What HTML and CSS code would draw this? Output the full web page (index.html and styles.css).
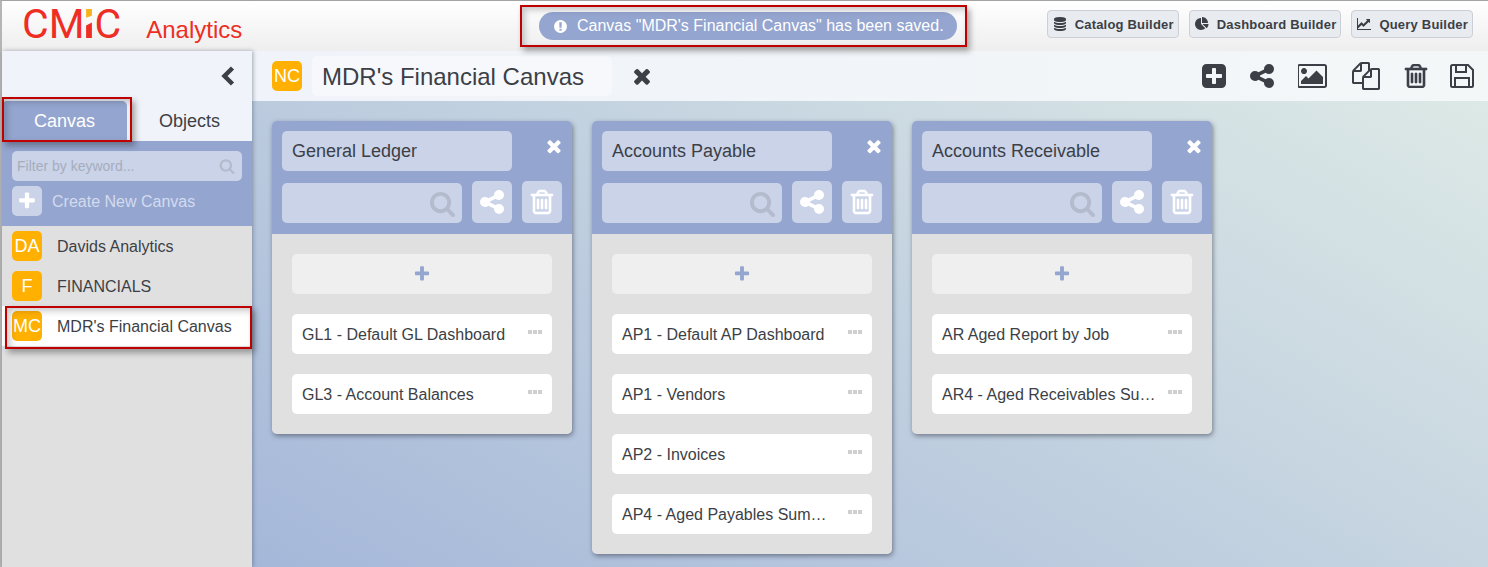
FILE: index.html
```html
<!DOCTYPE html>
<html lang="en">
<head>
    <meta charset="UTF-8">
    <title>CMiC Analytics</title>
    <link rel="stylesheet" href="styles.css">
</head>
<body>
    <svg class="sprite" xmlns="http://www.w3.org/2000/svg">
      <symbol id="i-share" viewBox="0 0 1792 1792"><path d="M1344 1024q133 0 226.500 93.500t93.500 226.500-93.500 226.500-226.500 93.500-226.500-93.500-93.500-226.500q0-12 2-34l-360-180q-92 86-218 86-133 0-226.500-93.500t-93.500-226.500 93.500-226.500 226.500-93.500q126 0 218 86l360-180q-2-22-2-34 0-133 93.500-226.500t226.500-93.500 226.500 93.500 93.500 226.500-93.500 226.500-226.500 93.500q-126 0-218-86l-360 180q2 22 2 34t-2 34l360 180q92-86 218-86z"/></symbol>
      <symbol id="i-close" viewBox="0 0 1792 1792"><path d="M1490 1322q0 40-28 68l-136 136q-28 28-68 28t-68-28l-294-294-294 294q-28 28-68 28t-68-28l-136-136q-28-28-28-68t28-68l294-294-294-294q-28-28-28-68t28-68l136-136q28-28 68-28t68 28l294 294 294-294q28-28 68-28t68 28l136 136q28 28 28 68t-28 68l-294 294 294 294q28 28 28 68z"/></symbol>
      <symbol id="i-trash" viewBox="0 0 1792 1792"><path d="M704 736v576q0 14-9 23t-23 9h-64q-14 0-23-9t-9-23v-576q0-14 9-23t23-9h64q14 0 23 9t9 23zm256 0v576q0 14-9 23t-23 9h-64q-14 0-23-9t-9-23v-576q0-14 9-23t23-9h64q14 0 23 9t9 23zm256 0v576q0 14-9 23t-23 9h-64q-14 0-23-9t-9-23v-576q0-14 9-23t23-9h64q14 0 23 9t9 23zm128 724v-948h-896v948q0 22 7 40.500t14.500 27 10.500 8.500h832q3 0 10.500-8.500t14.500-27 7-40.500zm-672-1076h448l-48-117q-7-9-17-11h-317q-10 2-17 11zm928 32v64q0 14-9 23t-23 9h-96v948q0 83-47 143.500t-113 60.500h-832q-66 0-113-58.500t-47-141.500v-952h-96q-14 0-23-9t-9-23v-64q0-14 9-23t23-9h309l70-167q15-37 54-63t79-26h320q40 0 79 26t54 63l70 167h309q14 0 23 9t9 23z"/></symbol>
      <symbol id="i-search" viewBox="0 0 1792 1792"><path d="M1216 832q0-185-131.500-316.500t-316.500-131.500-316.500 131.500-131.500 316.500 131.500 316.500 316.500 131.500 316.500-131.500 131.500-316.500zm512 832q0 52-38 90t-90 38q-54 0-90-38l-343-342q-179 124-399 124-143 0-273.500-55.500t-225-150-150-225-55.500-273.500 55.500-273.500 150-225 225-150 273.500-55.500 273.500 55.500 225 150 150 225 55.500 273.500q0 220-124 399l343 343q37 37 37 90z"/></symbol>
      <symbol id="i-plus" viewBox="0 0 1792 1792"><path d="M1600 736v192q0 40-28 68t-68 28h-416v416q0 40-28 68t-68 28h-192q-40 0-68-28t-28-68v-416h-416q-40 0-68-28t-28-68v-192q0-40 28-68t68-28h416v-416q0-40 28-68t68-28h192q40 0 68 28t28 68v416h416q40 0 68 28t28 68z"/></symbol>
      <symbol id="i-dots" viewBox="0 0 14 4"><path d="M0 0h4v4H0zM5 0h4v4H5zM10 0h4v4h-4z"/></symbol>
    </svg>

    <div class="app">
      <header class="topbar">
        <div class="brand">
          <span class="logo">CM<svg class="logo-i" viewBox="0 0 6 30"><path d="M0 0h6v7L0 9z" fill="#f5b21b"/><path d="M0 30V17l6-3v16z" fill="#ee2e24"/></svg>C</span>
          <span class="product">Analytics</span>
        </div>
        <div class="toast">
          <svg class="toast-icon" viewBox="0 0 1792 1792"><path d="M896 128q209 0 385.500 103t279.500 279.500 103 385.500-103 385.500-279.500 279.500-385.500 103-385.500-103-279.500-279.500-103-385.500 103-385.500 279.500-279.500 385.500-103zm128 1247v-190q0-14-9-23.500t-22-9.500h-192q-13 0-23 10t-10 23v190q0 13 10 23t23 10h192q13 0 22-9.500t9-23.500zm-2-344l18-621q0-12-10-18-10-8-24-8h-220q-14 0-24 8-10 6-10 18l17 621q0 10 10 17.500t24 7.500h185q14 0 23.500-7.500t10.500-17.500z"/></svg>
          Canvas "MDR's Financial Canvas" has been saved.
        </div>
        <nav class="builders">
          <a class="builder-btn"><svg viewBox="0 0 1536 1792"><path d="M768 768q237 0 443-43t325-127v170q0 69-103 128t-280 93.500-385 34.500-385-34.500-280-93.500-103-128v-170q119 84 325 127t443 43zm0 768q237 0 443-43t325-127v170q0 69-103 128t-280 93.500-385 34.500-385-34.500-280-93.500-103-128v-170q119 84 325 127t443 43zm0-384q237 0 443-43t325-127v170q0 69-103 128t-280 93.500-385 34.500-385-34.500-280-93.500-103-128v-170q119 84 325 127t443 43zm0-1152q208 0 385 34.500t280 93.500 103 128v128q0 69-103 128t-280 93.500-385 34.500-385-34.500-280-93.500-103-128v-128q0-69 103-128t280-93.500 385-34.500z"/></svg>Catalog Builder</a>
          <a class="builder-btn"><svg viewBox="0 0 1792 1792"><path d="M768 890l546 546q-106 108-247.500 168t-298.500 60q-209 0-385.500-103t-279.500-279.500-103-385.500 103-385.500 279.500-279.500 385.500-103v762zm187 6h773q0 157-60 298.500t-168 247.500zm709-128h-768v-768q209 0 385.500 103t279.500 279.500 103 385.500z"/></svg>Dashboard Builder</a>
          <a class="builder-btn"><svg viewBox="0 0 1792 1792"><path d="M1792 1536v128h-1792v-1536h128v1408h1664zm-128-1248v435q0 21-19.500 29.500t-35.500-7.500l-121-121-633 633q-10 10-23 10t-23-10l-233-233-416 416-192-192 585-585q10-10 23-10t23 10l233 233 464-464-121-121q-16-16-7.500-35.500t29.500-19.500h435q14 0 23 9t9 23z"/></svg>Query Builder</a>
        </nav>
      </header>

      <div class="workspace">
        <aside class="sidebar">
          <div class="collapse-row">
            <svg class="chevron" viewBox="0 0 14 20"><path d="M11.500 2 3.500 10l8 8" fill="none" stroke="#3c3f46" stroke-width="4.500"/></svg>
          </div>
          <div class="tabs">
            <div class="tab active">Canvas</div>
            <div class="tab">Objects</div>
          </div>
          <div class="filter-panel">
            <div class="filter-box">
              <span>Filter by keyword...</span>
              <svg class="icon"><use href="#i-search"/></svg>
            </div>
            <div class="create-row">
              <span class="create-btn"><svg class="icon"><use href="#i-plus"/></svg></span>
              <span class="row-label">Create New Canvas</span>
            </div>
          </div>
          <ul class="canvas-list">
            <li class="canvas-row"><span class="badge">DA</span><span class="row-label">Davids Analytics</span></li>
            <li class="canvas-row"><span class="badge">F</span><span class="row-label">FINANCIALS</span></li>
            <li class="canvas-row selected"><span class="badge">MC</span><span class="row-label">MDR's Financial Canvas</span></li>
          </ul>
        </aside>

        <main class="main">
          <div class="toolbar">
            <span class="badge">NC</span>
            <div class="canvas-title">MDR's Financial Canvas</div>
            <svg class="title-close"><use href="#i-close"/></svg>
            <div class="tools">
              <svg class="tool" viewBox="128 128 1536 1536"><path d="M1408 960v-128q0-26-19-45t-45-19h-320v-320q0-26-19-45t-45-19h-128q-26 0-45 19t-19 45v320h-320q-26 0-45 19t-19 45v128q0 26 19 45t45 19h320v320q0 26 19 45t45 19h128q26 0 45-19t19-45v-320h320q26 0 45-19t19-45zm256-544v960q0 119-84.500 203.500t-203.500 84.500h-960q-119 0-203.500-84.500t-84.500-203.500v-960q0-119 84.500-203.500t203.500-84.500h960q119 0 203.500 84.500t84.500 203.500z"/></svg>
              <svg class="tool" viewBox="128 128 1536 1536"><use href="#i-share" width="1792" height="1792"/></svg>
              <svg class="tool wide" viewBox="0 128 1920 1536"><path d="M576 576q0 80-56 136t-136 56-136-56-56-136 56-136 136-56 136 56 56 136zm1024 384v448h-1408v-192l320-320 160 160 512-512zm96-704h-1600q-13 0-22.500 9.500t-9.500 22.500v1216q0 13 9.500 22.500t22.500 9.500h1600q13 0 22.500-9.500t9.500-22.500v-1216q0-13-9.500-22.500t-22.500-9.500zm160 32v1216q0 66-47 113t-113 47h-1600q-66 0-113-47t-47-113v-1216q0-66 47-113t113-47h1600q66 0 113 47t47 113z"/></svg>
              <svg class="tool copy" viewBox="0 0 1792 1792"><path d="M1696 384q40 0 68 28t28 68v1216q0 40-28 68t-68 28h-960q-40 0-68-28t-28-68v-288h-544q-40 0-68-28t-28-68v-672q0-40 20-88t48-76l408-408q28-28 76-48t88-20h416q40 0 68 28t28 68v328q68-40 128-40h416zm-544 213l-299 299h299v-299zm-640-384l-299 299h299v-299zm196 647l316-316v-416h-384v416q0 40-28 68t-68 28h-416v640h512v-256q0-40 20-92t48-80zm956 804v-1152h-384v416q0 40-28 68t-68 28h-416v640h896z"/></svg>
              <svg class="tool trash" viewBox="128 128 1536 1536"><use href="#i-trash" width="1792" height="1792"/></svg>
              <svg class="tool save" viewBox="0 0 24 24"><path d="M1 2.500A1.500 1.500 0 0 1 2.500 1H18l5 5v15.500a1.500 1.500 0 0 1-1.500 1.500h-19A1.500 1.500 0 0 1 1 21.500zM6 1v7h10V1M5 23v-9h14v9" fill="none" stroke="#3c3f46" stroke-width="2"/></svg>
            </div>
          </div>

          <div class="board">
            <section class="column">
              <div class="column-head">
                <div class="head-top">
                  <div class="column-title">General Ledger</div>
                  <svg class="column-close"><use href="#i-close"/></svg>
                </div>
                <div class="head-tools">
                  <div class="column-search"><svg class="icon"><use href="#i-search"/></svg></div>
                  <span class="head-btn"><svg class="icon"><use href="#i-share"/></svg></span>
                  <span class="head-btn trash-btn"><svg class="icon"><use href="#i-trash"/></svg></span>
                </div>
              </div>
              <div class="column-body">
                <div class="add-item"><svg class="icon"><use href="#i-plus"/></svg></div>
                <div class="item"><span class="item-name">GL1 - Default GL Dashboard</span><svg class="dots"><use href="#i-dots"/></svg></div>
                <div class="item"><span class="item-name">GL3 - Account Balances</span><svg class="dots"><use href="#i-dots"/></svg></div>
              </div>
            </section>

            <section class="column">
              <div class="column-head">
                <div class="head-top">
                  <div class="column-title">Accounts Payable</div>
                  <svg class="column-close"><use href="#i-close"/></svg>
                </div>
                <div class="head-tools">
                  <div class="column-search"><svg class="icon"><use href="#i-search"/></svg></div>
                  <span class="head-btn"><svg class="icon"><use href="#i-share"/></svg></span>
                  <span class="head-btn trash-btn"><svg class="icon"><use href="#i-trash"/></svg></span>
                </div>
              </div>
              <div class="column-body">
                <div class="add-item"><svg class="icon"><use href="#i-plus"/></svg></div>
                <div class="item"><span class="item-name">AP1 - Default AP Dashboard</span><svg class="dots"><use href="#i-dots"/></svg></div>
                <div class="item"><span class="item-name">AP1 - Vendors</span><svg class="dots"><use href="#i-dots"/></svg></div>
                <div class="item"><span class="item-name">AP2 - Invoices</span><svg class="dots"><use href="#i-dots"/></svg></div>
                <div class="item"><span class="item-name">AP4 - Aged Payables Sum…</span><svg class="dots"><use href="#i-dots"/></svg></div>
              </div>
            </section>

            <section class="column">
              <div class="column-head">
                <div class="head-top">
                  <div class="column-title">Accounts Receivable</div>
                  <svg class="column-close"><use href="#i-close"/></svg>
                </div>
                <div class="head-tools">
                  <div class="column-search"><svg class="icon"><use href="#i-search"/></svg></div>
                  <span class="head-btn"><svg class="icon"><use href="#i-share"/></svg></span>
                  <span class="head-btn trash-btn"><svg class="icon"><use href="#i-trash"/></svg></span>
                </div>
              </div>
              <div class="column-body">
                <div class="add-item"><svg class="icon"><use href="#i-plus"/></svg></div>
                <div class="item"><span class="item-name">AR Aged Report by Job</span><svg class="dots"><use href="#i-dots"/></svg></div>
                <div class="item"><span class="item-name">AR4 - Aged Receivables Su…</span><svg class="dots"><use href="#i-dots"/></svg></div>
              </div>
            </section>
          </div>
        </main>
      </div>

      <!-- red annotation boxes drawn over the screenshot -->
      <div class="callout callout-tab"></div>
      <div class="callout callout-toast"></div>
      <div class="callout callout-row"></div>
    </div>
</body>
</html>
```

FILE: styles.css
```css
* {
    box-sizing: border-box;
}

body {
    margin: 0;
    height: 567px;
    overflow: hidden;
    font-family: "Liberation Sans", Arial, sans-serif;
    color: #3c3f46;
}

.sprite {
    display: none;
}

.icon {
    display: block;
}

.app {
    position: relative;
    display: flex;
    flex-direction: column;
    height: 567px;
    border-top: 1px solid #a3a3a3;
    border-left: 2px solid #b5b5b5;
}

/* top bar */
.topbar {
    display: flex;
    align-items: center;
    flex: 0 0 50px;
    padding-right: 15px;
    background: linear-gradient(#ffffff, #eeeeee);
}

.brand {
    display: flex;
    align-items: baseline;
    flex: 0 0 537px;
    padding-left: 20px;
}

.logo {
    font-family: Roboto, "Liberation Sans", sans-serif;
    font-size: 41px;
    line-height: 50px;
    margin-top: -4px;
    color: #ee2e24;
}

.logo-i {
    width: 6px;
    height: 29px;
    margin: 0 2px 0 2px;
}

.product {
    margin-left: 25px;
    font-size: 24px;
    color: #ee2e24;
}

.toast {
    display: flex;
    align-items: center;
    gap: 9px;
    width: 418px;
    height: 28px;
    padding-left: 14px;
    border-radius: 14px;
    background: #94a5d0;
    color: #fff;
    font-size: 16px;
    white-space: nowrap;
}

.toast-icon {
    width: 15px;
    height: 15px;
    fill: #fff;
}

.builders {
    display: flex;
    gap: 10px;
    margin-left: auto;
    margin-bottom: 4px;
}

.builder-btn {
    display: flex;
    align-items: center;
    gap: 8px;
    height: 28px;
    padding: 0 4px 0 5px;
    border: 1px solid #ccd0d6;
    border-radius: 4px;
    background: #e8ebef;
    font-size: 13px;
    font-weight: bold;
    letter-spacing: 0.2px;
    color: #3c3f46;
    white-space: nowrap;
}

.builder-btn svg {
    width: 14px;
    height: 14px;
    fill: #3c3f46;
}

/* sidebar */
.workspace {
    display: flex;
    flex: 1;
    min-height: 0;
}

.sidebar {
    position: relative;
    z-index: 2;
    flex: 0 0 250px;
    background: #f0f3f9;
    box-shadow: 1px 0 4px rgba(60, 70, 90, 0.45);
}

.collapse-row {
    display: flex;
    justify-content: flex-end;
    align-items: center;
    height: 50px;
    padding-right: 17px;
}

.chevron {
    width: 14px;
    height: 20px;
}

.tabs {
    display: flex;
    height: 40px;
}

.tab {
    flex: 1;
    font-size: 18px;
    line-height: 40px;
    text-align: center;
}

.tab.active {
    border-radius: 5px 5px 0 0;
    background: #94a5d0;
    color: #fff;
}

.filter-panel {
    height: 85px;
    padding: 10px 10px 0;
    background: #94a5d0;
}

.filter-box {
    display: flex;
    align-items: center;
    justify-content: space-between;
    height: 30px;
    padding: 0 7px 0 5px;
    border-radius: 5px;
    background: #cad3e8;
    font-size: 14px;
    color: #a5adbd;
}

.filter-box svg {
    width: 16px;
    height: 16px;
    fill: #b3bccd;
}

.create-row {
    display: flex;
    align-items: center;
    gap: 10px;
    margin-top: 5px;
    font-size: 16px;
    color: #d3dbee;
}

.create-btn {
    display: flex;
    align-items: center;
    justify-content: center;
    width: 30px;
    height: 30px;
    border-radius: 5px;
    background: #cad3e8;
}

.create-btn svg {
    width: 20px;
    height: 20px;
    fill: #fff;
}

.row-label {
    padding-top: 2px;
}

.canvas-list {
    height: 341px;
    margin: 0;
    padding: 0;
    list-style: none;
    background: #e0e0e0;
}

.canvas-row {
    display: flex;
    align-items: center;
    gap: 15px;
    height: 40px;
    padding-left: 10px;
    font-size: 16px;
}

.canvas-row.selected {
    background: #fff;
}

.badge {
    display: flex;
    align-items: center;
    justify-content: center;
    flex: 0 0 30px;
    height: 30px;
    padding-top: 1px;
    border-radius: 5px;
    background: #ffb000;
    color: #fff;
    font-size: 18px;
}

/* main area */
.main {
    display: flex;
    flex-direction: column;
    flex: 1;
    min-width: 0;
}

.toolbar {
    display: flex;
    align-items: center;
    flex: 0 0 50px;
    padding: 0 14px 0 20px;
    background: linear-gradient(90deg, #f0f3f9, #f3f7f8);
}

.canvas-title {
    width: 300px;
    height: 40px;
    margin-left: 10px;
    padding: 1px 0 0 10px;
    border-radius: 5px;
    background: #f6f8fc;
    font-size: 24px;
    line-height: 40px;
}

.title-close {
    width: 24px;
    height: 24px;
    margin-left: 18px;
    fill: #3c3f46;
}

.tools {
    display: flex;
    align-items: center;
    margin-left: auto;
}

.tool {
    width: 24px;
    height: 24px;
    margin-left: 24px;
    fill: #3c3f46;
}

.tool.wide {
    width: 30px;
}

.tool.copy {
    width: 28px;
    height: 28px;
}

.tool.trash {
    stroke: #3c3f46;
    stroke-width: 40;
}

.tool.save {
    margin-left: 22px;
}

.board {
    display: flex;
    align-items: flex-start;
    gap: 20px;
    flex: 1;
    padding: 20px;
    background: linear-gradient(30deg, #a5b7d9, #dde9e6);
}

.column {
    width: 300px;
    border-radius: 5px;
    overflow: hidden;
    box-shadow: 1px 2px 5px rgba(50, 55, 70, 0.55);
}

.column-head {
    height: 113px;
    padding: 10px 10px 0;
    background: #94a5d0;
}

.head-top {
    display: flex;
    justify-content: space-between;
}

.column-title {
    width: 230px;
    height: 40px;
    padding-left: 10px;
    border-radius: 5px;
    background: #cad3e8;
    font-size: 18px;
    line-height: 40px;
}

.column-close {
    width: 20px;
    height: 20px;
    margin: 5px -2px 0 0;
    fill: #fff;
}

.head-tools {
    display: flex;
    align-items: flex-end;
    gap: 10px;
    margin-top: 10px;
}

.column-search {
    display: flex;
    align-items: center;
    justify-content: flex-end;
    width: 180px;
    height: 40px;
    padding-right: 6px;
    border-radius: 5px;
    background: #cad3e8;
}

.column-search svg {
    width: 27px;
    height: 27px;
    fill: #b3bccd;
}

.head-btn {
    display: flex;
    align-items: center;
    justify-content: center;
    width: 40px;
    height: 42px;
    border-radius: 5px;
    background: #cad3e8;
}

.head-btn svg {
    width: 28px;
    height: 28px;
    fill: #fff;
}

.trash-btn svg {
    stroke: #fff;
    stroke-width: 40;
}

.column-body {
    display: flex;
    flex-direction: column;
    gap: 20px;
    padding: 20px;
    background: #e0e0e0;
}

.add-item {
    display: flex;
    align-items: center;
    justify-content: center;
    height: 40px;
    border-radius: 5px;
    background: #efefef;
}

.add-item svg {
    width: 18px;
    height: 18px;
    fill: #94a5d0;
}

.item {
    display: flex;
    align-items: center;
    justify-content: space-between;
    height: 40px;
    padding: 2px 10px 0;
    border-radius: 5px;
    background: #fff;
    font-size: 16px;
}

.item-name {
    white-space: nowrap;
}

.dots {
    flex: 0 0 14px;
    height: 4px;
    margin-bottom: 6px;
    fill: #cfcfcf;
}

/* annotation boxes */
.callout {
    position: absolute;
    z-index: 5;
    border: 2px solid #c00000;
    box-shadow: 3px 4px 6px rgba(40, 40, 40, 0.4), inset 3px 3px 6px rgba(40, 40, 40, 0.25);
}

.callout-tab {
    left: 0;
    top: 96px;
    width: 130px;
    height: 45px;
}

.callout-toast {
    left: 518px;
    top: 4px;
    width: 447px;
    height: 42px;
}

.callout-row {
    left: 3px;
    top: 305px;
    width: 247px;
    height: 43px;
}
```
